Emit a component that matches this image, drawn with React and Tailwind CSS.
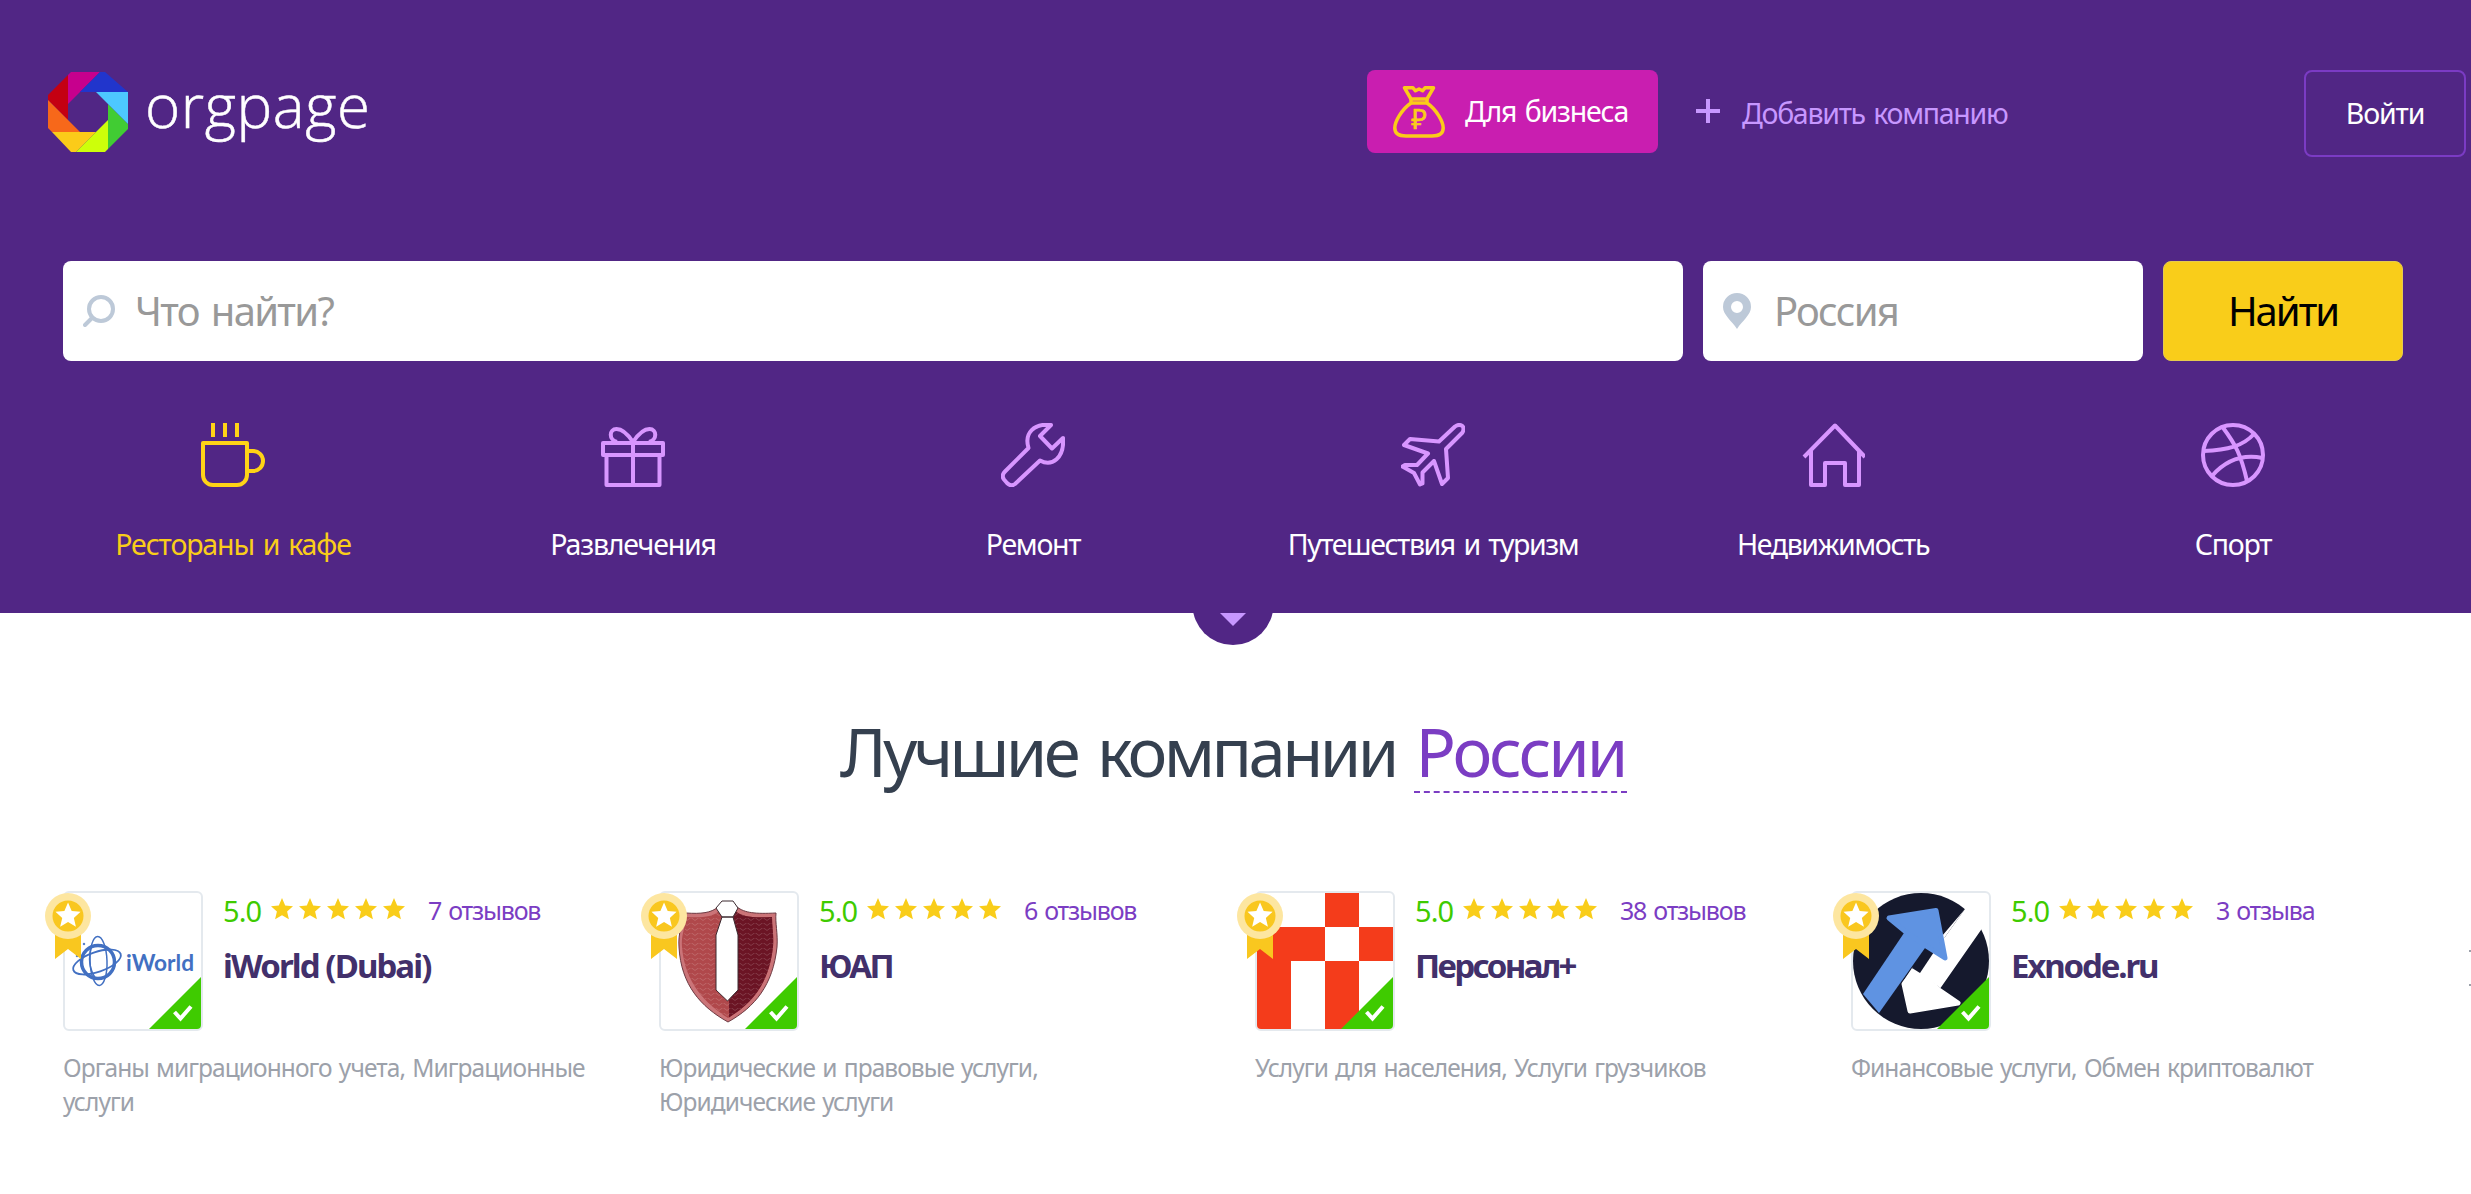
const STAR = 'M11 0l3.2 7.4 7.8.8-5.9 5.3 1.8 7.8L11 17.2l-6.9 4.1 1.8-7.8L0 8.2l7.8-.8z'

function Logo() {
  return (
    <svg width="80" height="80" viewBox="0 0 80 80">
      <path fill="#c7008d" d="M23 0h29L20 32V3z" />
      <path fill="#c40012" d="M20 3v45L0 28v-5z" />
      <path fill="#f7681a" d="M0 28l32 32H4l-4-4z" />
      <path fill="#fbcb19" d="M4 60h44L28 80h-5z" />
      <path fill="#cdff0a" d="M28 80l32-32v29l-3 3z" />
      <path fill="#41cc33" d="M60 32l20 20v5L60 77z" />
      <path fill="#4dc8ff" d="M48 20h32v32z" />
      <path fill="#2135cc" d="M52 0h5l23 20H32z" />
    </svg>
  )
}

function MoneyBag() {
  return (
    <svg width="52" height="52" viewBox="0 0 52 52" fill="none" stroke="#fbcb19" strokeWidth="3.5" strokeLinejoin="round">
      <path d="M18 13L11.5 1.8H20l2.5 3L26 3l3.5 1.8L32 1.8h8.5L34 13z" />
      <path d="M17 17h18" />
      <path d="M18 13v4C8 24 1.8 36 1.8 42C1.8 48 6 50 13 50h26c7 0 11.2-2.5 11.2-8C50.2 36 44 24 34 17v-4" />
      <text x="26" y="43" textAnchor="middle" fill="#fbcb19" stroke="#fbcb19" strokeWidth=".6" className="font-['Noto_Sans',sans-serif] text-[27px]">₽</text>
    </svg>
  )
}

const icons = {
  cup: (
    <>
      <path d="M12 0v14M24 0v14M36 0v14" />
      <path d="M2 20h44v32a10 10 0 0 1-10 10H12A10 10 0 0 1 2 52z" />
      <path d="M46 28h6a10 10 0 0 1 0 20h-6" />
    </>
  ),
  gift: (
    <>
      <path d="M2 20h60v12H2zM5.500 32v30h53V32M32 20v42" />
      <path d="M32 19C26 10 20 6 15.500 6C8 6 7.500 17 16 19M32 19C38 10 44 6 48.500 6C56 6 56.500 17 48 19" />
    </>
  ),
  wrench: (
    <path d="M50 2L39 13l12 12.500L62 15c1.500 20-11 29-23 22.500L14 61q-4 3-8-1l-3-3.500q-3-4 1-8L27.500 25C23 10 33 0 50 2z" />
  ),
  plane: (
    <path d="M38 18.500L54 3.500C58 .5 65 2 61.500 9.500L45 26l2 29-6 6-8-23-11.500 11.500v11l-2.500 1-6-11.500L1.500 43.500 4 42h12l11-11.500L3 22l6-6z" />
  ),
  house: (
    <path d="M3 34L34 2.500l30 31.500M10 28v34h14V40h20v22h14V28" />
  ),
  ball: (
    <>
      <circle cx="32" cy="32" r="30" />
      <path d="M53 11C42 23 27 27 2.500 28M61.500 35C41 31 24 38 11 53M21.500 4C35 22 40 32 46 58" />
    </>
  ),
}

const categories = [
  { label: 'Рестораны и кафе', icon: 'cup', track: 'tracking-[-0.04em]', active: true },
  { label: 'Развлечения', icon: 'gift', track: 'tracking-[-0.042em]' },
  { label: 'Ремонт', icon: 'wrench', track: 'tracking-[-0.045em]' },
  { label: 'Путешествия и туризм', icon: 'plane', track: 'tracking-[-0.05em]' },
  { label: 'Недвижимость', icon: 'house', track: 'tracking-[-0.048em]' },
  { label: 'Спорт', icon: 'ball', track: 'tracking-[-0.045em]' },
]

function IWorldLogo() {
  return (
    <svg width="136" height="136" viewBox="0 0 136 136" fill="none" stroke="#4270c2">
      <circle cx="33" cy="69" r="16.500" strokeWidth="3.500" />
      <ellipse cx="32" cy="69" rx="25" ry="10" strokeWidth="1.800" transform="rotate(-19 32 69)" />
      <ellipse cx="33.500" cy="68" rx="8.500" ry="24.500" strokeWidth="1.500" transform="rotate(-2 33 68)" />
      <path d="M27 52c-4 12-3 24 4 34" strokeWidth="1.500" />
      <circle cx="19" cy="51" r=".8" fill="#4270c2" />
      <circle cx="12" cy="63" r=".8" fill="#4270c2" />
      <text x="61" y="78" textLength="68" lengthAdjust="spacingAndGlyphs" fill="#4270c2" stroke="none" className="font-['Lato',sans-serif] text-[22px] font-bold">iWorld</text>
    </svg>
  )
}

function ShieldLogo() {
  return (
    <svg width="136" height="136" viewBox="0 0 136 136">
      <defs>
        <pattern id="weave" width="8" height="5" patternUnits="userSpaceOnUse">
          <path d="M0 1q2 3 4 0t4 0" fill="none" stroke="#ffffff" strokeOpacity=".16" strokeWidth="1" />
        </pattern>
        <clipPath id="half">
          <path d="M68 0h68v136H68z" />
        </clipPath>
      </defs>
      <path fill="#cb7478" stroke="#6d3a42" d="M25 20C40 21 50 20 57 14h19c8 6 18 7 39 6-1 10 2 20 1 34-4 38-22 60-49 75C40 114 20 92 18 54c-1-14 3-24 7-34z" />
      <path fill="#b0484b" d="M26 24C40 25 52 24 58 18h16c8 6 18 7 37 6 0 10 2 18 1 30-4 36-20 56-45 71C44 110 24 90 21 54c-1-12 3-20 5-30z" />
      <path fill="#6b1424" clipPath="url(#half)" d="M26 24C40 25 52 24 58 18h16c8 6 18 7 37 6 0 10 2 18 1 30-4 36-20 56-45 71C44 110 24 90 21 54z" />
      <path fill="url(#weave)" d="M26 24C40 25 52 24 58 18h16c8 6 18 7 37 6 0 10 2 18 1 30-4 36-20 56-45 71C44 110 24 90 21 54z" />
      <path fill="#fff" stroke="#3c2a30" d="M61 8h11l5 7-5 9H61l-6-9zM61 24h11l5 18v55l-10.500 11L55 97V42z" />
    </svg>
  )
}

function PersonalLogo() {
  return (
    <svg width="136" height="136" viewBox="0 0 136 136" fill="#f43c1b">
      <path d="M68 0h34v34H68zM0 34h68v34H34v68H0zM102 34h34v34h-34zM68 68h34v68H68z" />
    </svg>
  )
}

function ExnodeLogo() {
  return (
    <svg width="136" height="136" viewBox="0 0 136 136" strokeLinejoin="round">
      <circle cx="68" cy="68" r="68" fill="#15192d" />
      <path fill="#fff" d="M112 16L92 44 67 80l-8-5-10 15z" />
      <path fill="#fff" d="M112 16l24-6-8 27L87.500 95 59 75 92 44z" />
      <path fill="#fff" stroke="#fff" strokeWidth="5" d="M51 91l11-14 24 20 19 13-48 8z" />
      <path fill="#15192d" d="M59 75l8 5 22-33-14-2z" />
      <path fill="#5f93e2" d="M10 101L51 40l30-10-9 25-46 65z" />
      <path fill="#5f93e2" stroke="#5f93e2" strokeWidth="5" d="M36 25l47-7.500L92 65 73 53 53 39z" />
    </svg>
  )
}

const companies = [
  { name: 'iWorld (Dubai)', track: 'tracking-[-0.058em]', reviews: '7 отзывов', about: 'Органы миграционного учета, Миграционные услуги', logo: <IWorldLogo /> },
  { name: 'ЮАП', track: 'tracking-[-0.08em]', reviews: '6 отзывов', about: 'Юридические и правовые услуги, Юридические услуги', logo: <ShieldLogo /> },
  { name: 'Персонал+', track: 'tracking-[-0.08em]', reviews: '38 отзывов', about: 'Услуги для населения, Услуги грузчиков', logo: <PersonalLogo /> },
  { name: 'Exnode.ru', track: 'tracking-[-0.065em]', reviews: '3 отзыва', about: 'Финансовые услуги, Обмен криптовалют', logo: <ExnodeLogo /> },
]

function Company({ company }) {
  return (
    <div className="mr-[66px] w-[530px] shrink-0">
      <div className="flex gap-5">
        <div className="relative h-[140px] w-[140px] rounded-md border-2 border-[#e4e9ee]">
          <div className="overflow-hidden rounded">{company.logo}</div>
          {/* Verified corner */}
          <svg className="absolute right-0 bottom-0 rounded-br" width="52" height="52" viewBox="0 0 52 52">
            <path fill="#3fcb00" d="M0 52L52 0v52z" />
            <path fill="none" stroke="#fff" strokeWidth="4" d="M25.500 35l6 6.500L42 29.500" />
          </svg>
          {/* Medal */}
          <svg className="absolute top-0 -left-5" width="46" height="66" viewBox="0 0 46 66">
            <path fill="#f9c71f" d="M10 38h26v28L23 56 10 66z" />
            <circle cx="23" cy="23" r="23" fill="#fde6a0" />
            <circle cx="23" cy="23" r="15.500" fill="#f9c71f" />
            <path fill="#fff" transform="translate(10.500 9.500) scale(1.140)" d={STAR} />
          </svg>
        </div>
        <div>
          <div className="flex h-10 items-center">
            <span className="w-[48px] text-[29px] tracking-[-0.03em] text-[#3fcb00]">5.0</span>
            <div className="flex gap-1.5 pb-1">
              {[0, 1, 2, 3, 4].map(i => (
                <svg key={i} width="22" height="22" viewBox="0 0 22 22">
                  <path fill="#f9cd1a" d={STAR} />
                </svg>
              ))}
            </div>
            <span className="pl-[23px] text-[25px] tracking-[-0.048em] [word-spacing:0.07em] whitespace-nowrap text-[#7b3dc3]">{company.reviews}</span>
          </div>
          <div className={`mt-[15px] text-[33px] leading-[40px] font-bold whitespace-nowrap text-[#42306b] ${company.track}`}>{company.name}</div>
        </div>
      </div>
      <p className="mt-5 text-[24.5px] leading-[34px] tracking-[-0.038em] [word-spacing:0.07em] text-[#9ca1aa]">{company.about}</p>
    </div>
  )
}

export default function App() {
  return (
    <div className="h-[1194px] w-[2471px] overflow-hidden bg-white font-['Noto_Sans','Open_Sans',sans-serif]">
      <header className="h-[613px] bg-[#512685] pt-[70px]">
        <div className="flex h-[87px] items-start pr-[5px] pl-12">
          <div className="flex w-[1319px] gap-[17px] pt-0.5">
            <Logo />
            <span className="h-[66px] font-['Open_Sans',sans-serif] text-[60px] leading-[66px] font-light tracking-[0.01em] text-white [-webkit-text-stroke:0.5px_white]">orgpage</span>
          </div>
          <button className="flex h-[83px] w-[291px] items-center rounded-lg bg-[#c91eb0] pl-[26px] text-[28.5px] text-white">
            <MoneyBag />
            <span className="pl-5 tracking-[-0.042em] [word-spacing:0.08em] whitespace-nowrap">Для бизнеса</span>
          </button>
          <a className="ml-[38px] flex h-[86px] items-center text-[28.5px] text-[#c797ff]">
            <svg className="mb-1" width="24" height="24" viewBox="0 0 24 24" stroke="#c797ff" strokeWidth="4">
              <path d="M0 12h24M12 0v24" />
            </svg>
            <span className="pl-[22px] tracking-[-0.045em] [word-spacing:0.08em] whitespace-nowrap">Добавить компанию</span>
          </a>
          <button className="ml-auto h-[87px] w-[162px] rounded-lg border-2 border-[#7b3bc4] text-[28.5px] tracking-[-0.04em] text-white">Войти</button>
        </div>

        {/* Search */}
        <div className="mt-[104px] flex h-[100px] gap-5 pl-[63px] text-[40px]">
          <div className="flex w-[1620px] items-center rounded-lg bg-white pl-5">
            <svg width="32" height="32" viewBox="0 0 32 32" fill="none" stroke="#bdc9d8" strokeWidth="4" strokeLinecap="round">
              <circle cx="18" cy="14" r="12" />
              <path d="M9 23l-7 7" />
            </svg>
            <span className="pl-5 tracking-[-0.042em] [word-spacing:0.08em] text-[#999]">Что найти?</span>
          </div>
          <div className="flex w-[440px] items-center rounded-lg bg-white pl-5">
            <svg width="28" height="36" viewBox="0 0 28 36" fill="#bdc9d8">
              <path fillRule="evenodd" d="M14 0a14 14 0 0 1 14 14c0 8-9 14-14 22C9 28 0 22 0 14A14 14 0 0 1 14 0zm0 8a6 6 0 1 0 0 12 6 6 0 0 0 0-12z" />
            </svg>
            <span className="pl-[23px] tracking-[-0.043em] text-[#999]">Россия</span>
          </div>
          <button className="w-60 rounded-lg border border-[#e6cb4d] bg-[#f9cd1a] tracking-[-0.05em] text-black">Найти</button>
        </div>

        {/* Categories */}
        <nav className="mt-[62px] flex pl-[33px]">
          {categories.map(c => (
            <a key={c.label} className={`flex w-[400px] flex-col items-center ${c.active ? 'text-[#f9cd1a]' : 'text-white'}`}>
              <svg width="64" height="64" viewBox="0 0 64 64" fill="none" stroke={c.active ? '#ffd316' : '#d896ff'} strokeWidth="4" strokeLinejoin="round">
                {icons[c.icon]}
              </svg>
              <span className={`mt-[39px] text-[28.5px] leading-9 [word-spacing:0.09em] whitespace-nowrap ${c.track}`}>{c.label}</span>
            </a>
          ))}
        </nav>
      </header>

      <div className="flex pl-[1193px]">
        <svg width="80" height="32" viewBox="0 0 80 32">
          <circle cx="40" cy="-8.5" r="40.5" fill="#512685" />
          <path fill="#c797ff" d="M27 0h26L40 13z" />
        </svg>
      </div>

      <h1 className="mt-[67px] flex pl-[840px] text-[67px] leading-[79px] whitespace-nowrap text-[#35404f]">
        <span className="w-[574px] tracking-[-0.054em] [word-spacing:0.09em]">Лучшие компании</span>
        <a className="w-[213px] border-b-2 border-dashed border-[#7b3dc3] text-center tracking-[-0.046em] text-[#7b3dc3]">России</a>
      </h1>

      <section className="mt-[98px] flex items-start pl-[63px]">
        {companies.map(c => (
          <Company key={c.name} company={c} />
        ))}
        {/* Edge of the next arrow */}
        <div className="flex h-[95px] w-6 shrink-0 flex-col items-end justify-end gap-8 self-start pt-[58px]">
          <span className="h-0.5 w-0.5 bg-[#9ca1aa]" />
          <span className="h-0.5 w-0.5 bg-[#9ca1aa]" />
        </div>
      </section>
    </div>
  )
}
